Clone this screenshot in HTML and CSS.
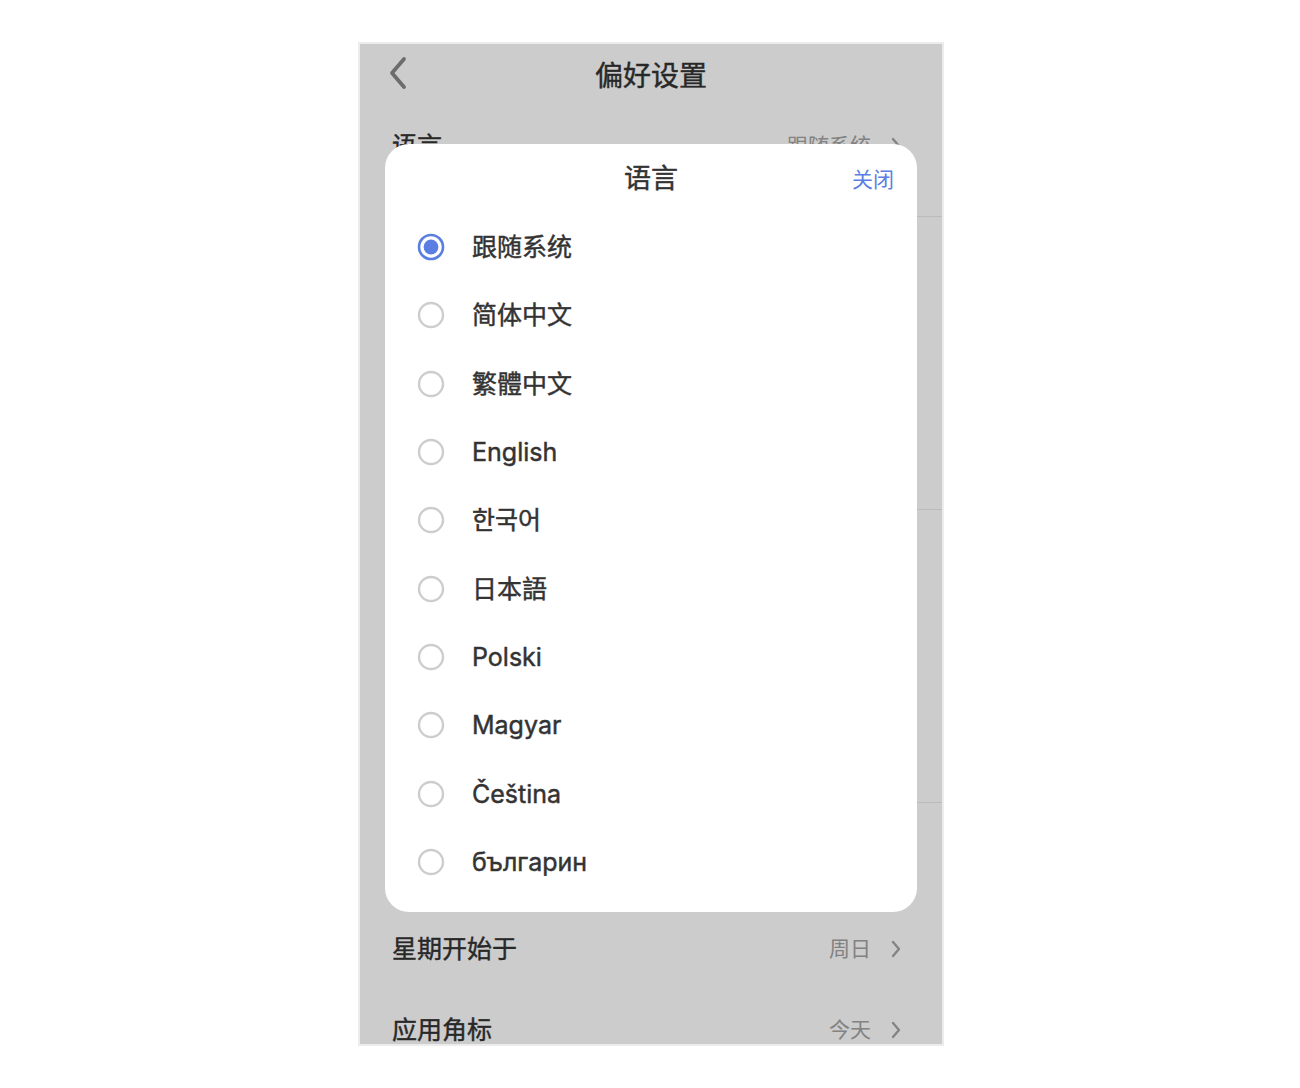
FILE: index.html
```html
<!DOCTYPE html>
<html lang="zh-CN">
<head>
<meta charset="utf-8">
<title>偏好设置</title>
<link rel="stylesheet" href="styles.css">
</head>
<body>
<div class="phone">
  <div class="page">
    <header class="nav">
      <svg class="back" width="22" height="34" viewBox="0 0 22 34"><path d="M17 3 L5 17 L17 31" fill="none" stroke="#888888" stroke-width="3.8" stroke-linecap="round" stroke-linejoin="round"/></svg>
      <h1 class="nav-title">偏好设置</h1>
    </header>
    <div class="row row-first sep">
      <span class="row-label">语言</span>
      <span class="row-value">跟随系统<svg class="chev" width="10" height="18" viewBox="0 0 10 18"><path d="M2 2 L8 9 L2 16" fill="none" stroke="#a6a6a6" stroke-width="2.4" stroke-linecap="round" stroke-linejoin="round"/></svg></span>
    </div>
    <div class="block sep"></div>
    <div class="block sep"></div>
    <div class="spacer"></div>
    <div class="row">
      <span class="row-label">星期开始于</span>
      <span class="row-value">周日<svg class="chev" width="10" height="18" viewBox="0 0 10 18"><path d="M2 2 L8 9 L2 16" fill="none" stroke="#a6a6a6" stroke-width="2.4" stroke-linecap="round" stroke-linejoin="round"/></svg></span>
    </div>
    <div class="row">
      <span class="row-label">应用角标</span>
      <span class="row-value">今天<svg class="chev" width="10" height="18" viewBox="0 0 10 18"><path d="M2 2 L8 9 L2 16" fill="none" stroke="#a6a6a6" stroke-width="2.4" stroke-linecap="round" stroke-linejoin="round"/></svg></span>
    </div>
  </div>
  <div class="mask"></div>
  <div class="sheet">
    <div class="sheet-head">
      <span class="sheet-title">语言</span>
      <span class="sheet-close">关闭</span>
    </div>
    <ul class="options">
      <li class="opt"><svg class="radio" width="28" height="28" viewBox="0 0 28 28"><circle cx="14" cy="14" r="12" fill="none" stroke="#5b7ee2" stroke-width="2.6"/><circle cx="14" cy="14" r="7.4" fill="#5b7ee2"/></svg><span class="opt-label">跟随系统</span></li>
      <li class="opt"><svg class="radio" width="28" height="28" viewBox="0 0 28 28"><circle cx="14" cy="14" r="12" fill="none" stroke="#cdcdcd" stroke-width="2.4"/></svg><span class="opt-label">简体中文</span></li>
      <li class="opt"><svg class="radio" width="28" height="28" viewBox="0 0 28 28"><circle cx="14" cy="14" r="12" fill="none" stroke="#cdcdcd" stroke-width="2.4"/></svg><span class="opt-label">繁體中文</span></li>
      <li class="opt"><svg class="radio" width="28" height="28" viewBox="0 0 28 28"><circle cx="14" cy="14" r="12" fill="none" stroke="#cdcdcd" stroke-width="2.4"/></svg><span class="opt-label">English</span></li>
      <li class="opt"><svg class="radio" width="28" height="28" viewBox="0 0 28 28"><circle cx="14" cy="14" r="12" fill="none" stroke="#cdcdcd" stroke-width="2.4"/></svg><span class="opt-label">한국어</span></li>
      <li class="opt"><svg class="radio" width="28" height="28" viewBox="0 0 28 28"><circle cx="14" cy="14" r="12" fill="none" stroke="#cdcdcd" stroke-width="2.4"/></svg><span class="opt-label">日本語</span></li>
      <li class="opt"><svg class="radio" width="28" height="28" viewBox="0 0 28 28"><circle cx="14" cy="14" r="12" fill="none" stroke="#cdcdcd" stroke-width="2.4"/></svg><span class="opt-label">Polski</span></li>
      <li class="opt"><svg class="radio" width="28" height="28" viewBox="0 0 28 28"><circle cx="14" cy="14" r="12" fill="none" stroke="#cdcdcd" stroke-width="2.4"/></svg><span class="opt-label">Magyar</span></li>
      <li class="opt"><svg class="radio" width="28" height="28" viewBox="0 0 28 28"><circle cx="14" cy="14" r="12" fill="none" stroke="#cdcdcd" stroke-width="2.4"/></svg><span class="opt-label">Čeština</span></li>
      <li class="opt"><svg class="radio" width="28" height="28" viewBox="0 0 28 28"><circle cx="14" cy="14" r="12" fill="none" stroke="#cdcdcd" stroke-width="2.4"/></svg><span class="opt-label">българин</span></li>
    </ul>
  </div>
</div>
</body>
</html>
```

FILE: styles.css
```css
* { box-sizing: border-box; }

html, body {
  margin: 0;
  padding: 0;
  background: #ffffff;
}

body {
  font-family: "Inter", "Noto Sans CJK SC", "Noto Sans", sans-serif;
  color: #333333;
}

.phone {
  position: relative;
  width: 586px;
  height: 1004px;
  margin: 42px 0 0 358px;
  border: 2px solid #ececec;
  overflow: hidden;
}

.page {
  display: flex;
  flex-direction: column;
  height: 100%;
  background: #ffffff;
}

.nav {
  position: relative;
  display: flex;
  align-items: center;
  justify-content: center;
  height: 64px;
  flex: none;
}

.back {
  position: absolute;
  left: 27px;
  top: 12px;
}

.nav-title {
  margin: 0;
  font-size: 28px;
  font-weight: 400;
  line-height: 40px;
  color: #333333;
  -webkit-text-stroke: 0.4px #333333;
}

.row {
  display: flex;
  align-items: center;
  justify-content: space-between;
  height: 81px;
  padding: 0 41px 0 32px;
  flex: none;
}

.row-first {
  height: 109px;
  align-items: flex-start;
  padding-top: 20px;
}

.sep {
  border-bottom: 1px solid #eaeaea;
  margin-left: 32px;
  padding-left: 0;
}

.row-label {
  font-size: 25px;
  font-weight: 400;
  line-height: 36px;
  color: #333333;
  -webkit-text-stroke: 0.4px #333333;
}

.row-value {
  display: flex;
  align-items: center;
  gap: 20px;
  font-size: 21px;
  line-height: 36px;
  color: #a3a3a3;
}

.block {
  height: 293px;
  flex: none;
}

.spacer {
  height: 105px;
  flex: none;
}

.mask {
  position: absolute;
  inset: 0;
  background: rgba(0, 0, 0, 0.2);
}

.sheet {
  position: absolute;
  left: 25px;
  right: 25px;
  top: 100px;
  height: 768px;
  background: #ffffff;
  border-radius: 24px;
  padding: 0 0 17px;
}

.sheet-head {
  position: relative;
  display: flex;
  align-items: center;
  justify-content: center;
  height: 69px;
}

.sheet-title {
  font-size: 27px;
  font-weight: 400;
  line-height: 36px;
  color: #333333;
  -webkit-text-stroke: 0.45px #333333;
}

.sheet-close {
  position: absolute;
  right: 23px;
  top: 20px;
  font-size: 21px;
  line-height: 32px;
  color: #5b7ee2;
}

.options {
  list-style: none;
  margin: 0;
  padding: 0;
}

.opt {
  display: flex;
  align-items: center;
  height: 68.3px;
  padding-left: 32px;
  gap: 27px;
}

.radio {
  flex: none;
}

.opt-label {
  font-size: 25px;
  font-weight: 400;
  line-height: 34px;
  color: #333333;
  -webkit-text-stroke: 0.45px #333333;
}
```
